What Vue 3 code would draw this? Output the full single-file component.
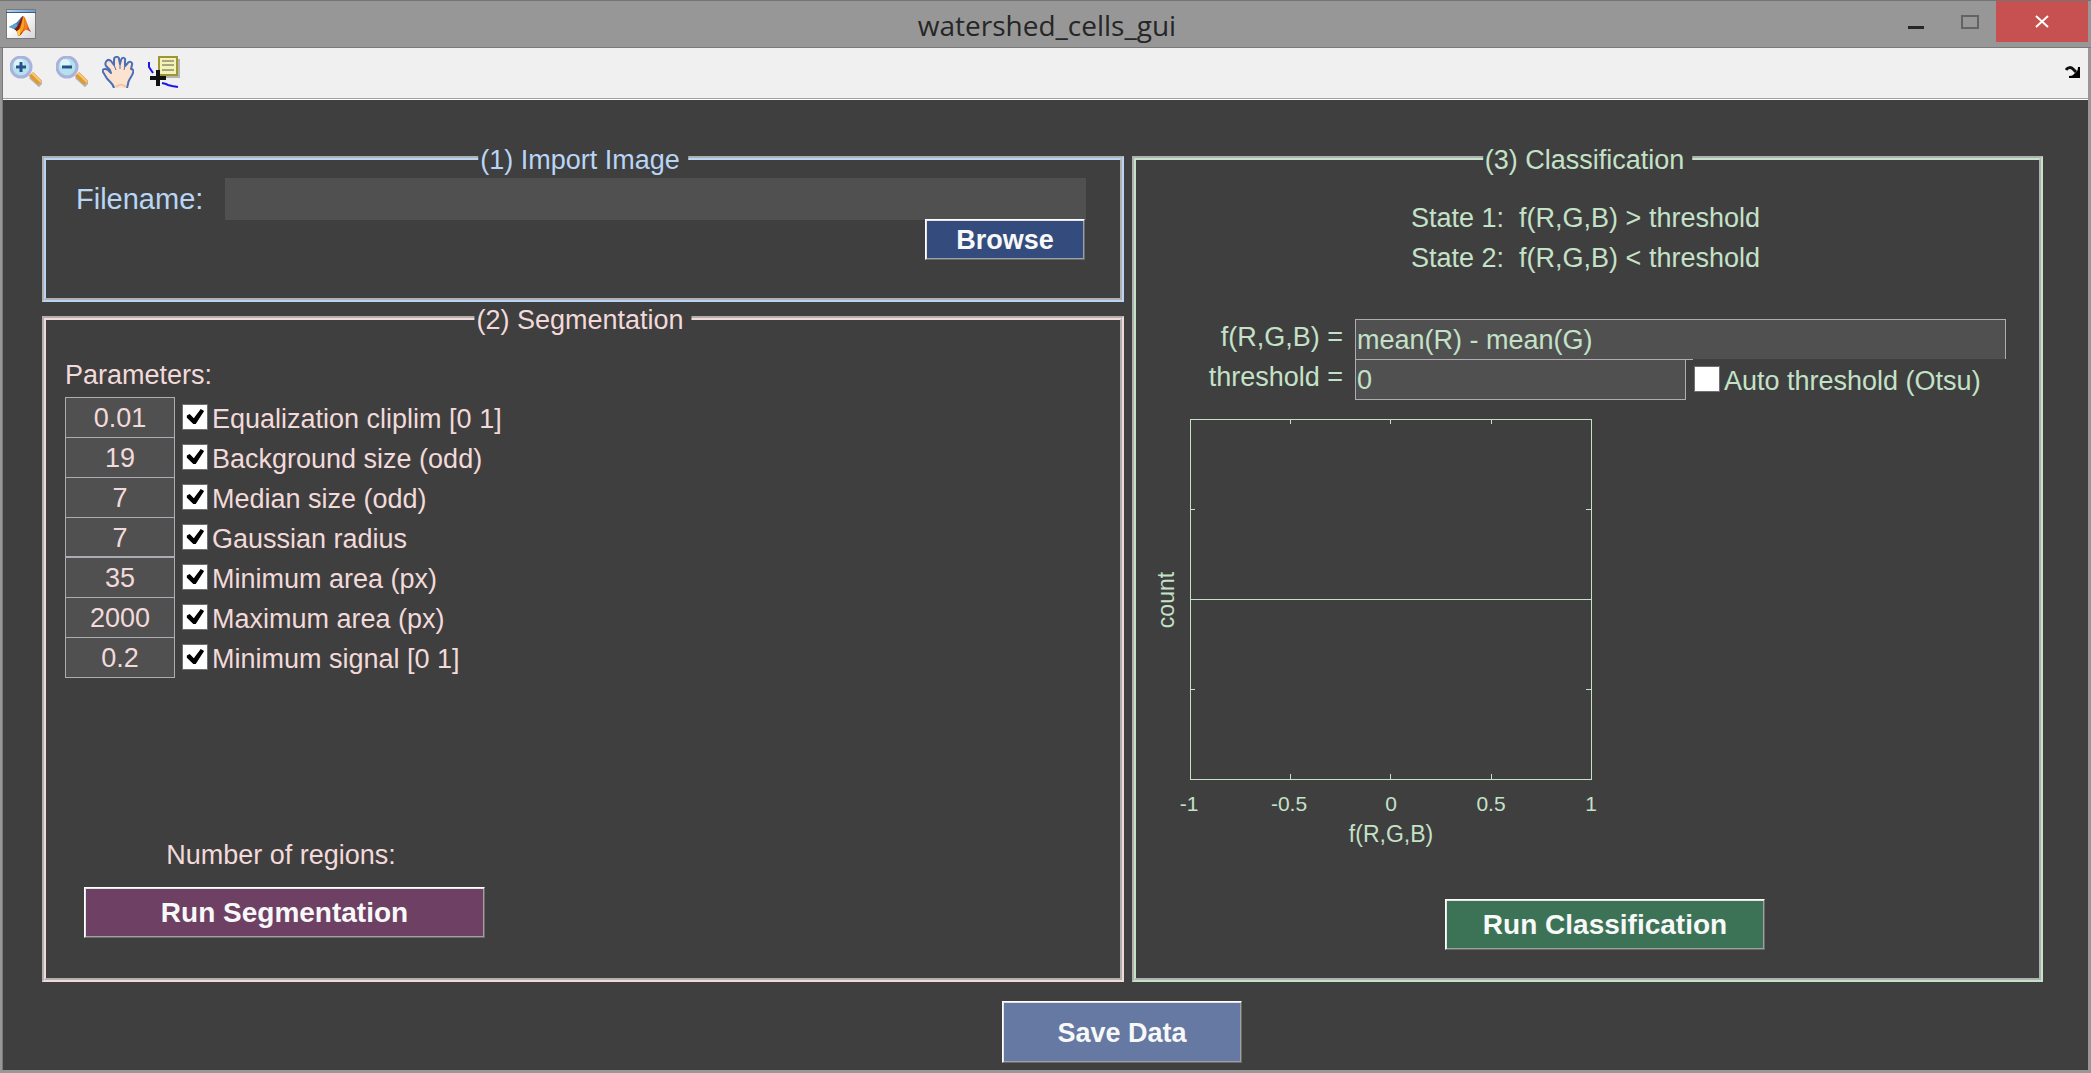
<script setup>
import { ref } from 'vue'

const filename = ref('')
const expression = ref('mean(R) - mean(G)')
const threshold = ref('0')
const autoThreshold = ref(false)

const params = ref([
  { id: 'cliplim', value: '0.01', on: true, label: 'Equalization cliplim [0 1]' },
  { id: 'background', value: '19', on: true, label: 'Background size (odd)' },
  { id: 'median', value: '7', on: true, label: 'Median size (odd)' },
  { id: 'gaussian', value: '7', on: true, label: 'Gaussian radius', last: true },
  { id: 'minarea', value: '35', on: true, label: 'Minimum area (px)' },
  { id: 'maxarea', value: '2000', on: true, label: 'Maximum area (px)' },
  { id: 'minsignal', value: '0.2', on: true, label: 'Minimum signal [0 1]' },
])

const xTicks = [
  { x: 53, text: '-1' },
  { x: 153, text: '-0.5' },
  { x: 255, text: '0' },
  { x: 355, text: '0.5' },
  { x: 455, text: '1' },
]
</script>

<template>
  <div class="window">
    <header class="titlebar">
      <svg class="app-icon" viewBox="0 0 30 30" aria-hidden="true">
        <defs>
          <linearGradient id="doc" x1="0" y1="0" x2="1" y2="1">
            <stop offset="0.4" stop-color="#ffffff" />
            <stop offset="1" stop-color="#d4d4d4" />
          </linearGradient>
          <linearGradient id="bar" x1="0" x2="1">
            <stop offset="0" stop-color="#b5d3ee" />
            <stop offset="1" stop-color="#6a9fd0" />
          </linearGradient>
          <linearGradient id="peak" x1="0" x2="1">
            <stop offset="0.25" stop-color="#8c1c14" />
            <stop offset="0.5" stop-color="#e8501a" />
            <stop offset="0.7" stop-color="#f58a1e" />
            <stop offset="1" stop-color="#a3210f" />
          </linearGradient>
        </defs>
        <rect x="0.5" y="0.5" width="29" height="29" fill="url(#doc)" stroke="#77797c" />
        <rect x="1" y="1" width="28" height="2" fill="url(#bar)" />
        <rect x="0" y="3" width="30" height="1" fill="#3c5a80" />
        <path d="M3 18 L10 14 C13 12 14 8 17 7 L15 15 L11 21 L8 20 Z" fill="#2f7fb5" />
        <path d="M3 18 L8 20 L12 17 L10 14 Z" fill="#5aa5d0" />
        <path d="M8 20 C12 20 14 9 17 7 C20 7 21 17 25 23 C22 21 20 20 18 22 C16 24 15 27 12 27 C12 23 10 21 8 20 Z" fill="url(#peak)" />
        <path d="M17 7 C16 14 15 19 12 22 L13 26 C17 22 19 19 18 9 Z" fill="#f6a31f" />
        <path d="M17 7 C16 13 14 18 11 21 L9 20 C13 18 14 10 17 7 Z" fill="#7c1a16" />
        <path d="M11 22 L14 20 L14 26 L12 27 Z" fill="#fbd034" />
      </svg>
      <h1 class="title">watershed_cells_gui</h1>
      <div class="controls">
        <button class="ctl" type="button" aria-label="Minimize">
          <svg width="18" height="16" viewBox="0 0 18 16"><rect x="0" y="12" width="16" height="3" fill="#262626" /></svg>
        </button>
        <button class="ctl" type="button" aria-label="Maximize">
          <svg width="18" height="16" viewBox="0 0 18 16"><rect x="1" y="2" width="16" height="12" fill="none" stroke="#636363" stroke-width="2" /></svg>
        </button>
        <button class="ctl close" type="button" aria-label="Close">
          <svg width="14" height="14" viewBox="0 0 14 14"><path d="M1 1 L13 12 M13 1 L1 12" stroke="#fff" stroke-width="2" /></svg>
        </button>
      </div>
    </header>

    <div class="client">
      <nav class="toolbar" aria-label="Figure tools">
        <button class="tool" type="button" aria-label="Zoom in">
          <svg viewBox="0 0 32 32">
            <path d="M21 20 L31 29" stroke="#6b6b6b" stroke-width="6" opacity="0.45" />
            <path d="M21 18 L30 27" stroke="#e09a35" stroke-width="6" />
            <path d="M22 17 L31 26" stroke="#f8c778" stroke-width="2" />
            <circle cx="11" cy="11" r="10" fill="#b4e2ec" stroke="#a9b1dc" stroke-width="3" />
            <circle cx="9" cy="8" r="5" fill="#dcf5f8" />
            <path d="M6 11 H16 M11 6 V16" stroke="#27508a" stroke-width="3" />
          </svg>
        </button>
        <button class="tool" type="button" aria-label="Zoom out">
          <svg viewBox="0 0 32 32">
            <path d="M21 20 L31 29" stroke="#6b6b6b" stroke-width="6" opacity="0.45" />
            <path d="M21 18 L30 27" stroke="#e09a35" stroke-width="6" />
            <path d="M22 17 L31 26" stroke="#f8c778" stroke-width="2" />
            <circle cx="11" cy="11" r="10" fill="#b4e2ec" stroke="#a9b1dc" stroke-width="3" />
            <circle cx="9" cy="8" r="5" fill="#dcf5f8" />
            <path d="M6 11 H16" stroke="#27508a" stroke-width="3" />
          </svg>
        </button>
        <button class="tool" type="button" aria-label="Pan">
          <svg viewBox="0 0 32 32">
            <path d="M12 32 C11 27 6 25 4 21 L1 16 C0 13 3 12 6 14 L9 17 L8 14 L4 10 C2 6 6 2 9 5 L12 9 L12 4 C12 0 17 0 17 3 L18 8 L19 4 C20 1 24 1 23 5 L23 10 L25 8 C27 4 31 6 30 9 L29 13 C33 13 31 18 29 21 C27 24 26 26 26 28 L25 32" fill="#fce3cf" stroke="#4a6fb8" stroke-width="2" stroke-linejoin="round" />
            <path d="M12 9 L14 14 M18 8 V13 M23 10 L22 14" fill="none" stroke="#4a6fb8" stroke-width="1" />
            <path d="M14 31 C17 28 21 28 24 31" fill="none" stroke="#f1c49c" stroke-width="2" />
          </svg>
        </button>
        <button class="tool" type="button" aria-label="Data cursor">
          <svg viewBox="0 0 32 32">
            <rect x="13" y="3" width="19" height="19" fill="#9a9a9a" opacity="0.7" />
            <rect x="11" y="1" width="18" height="18" fill="#f4f2b8" stroke="#9c9634" stroke-width="2" />
            <path d="M14 5 H26 M14 9 H26 M14 14 H26" stroke="#a8a67c" stroke-width="2" />
            <path d="M1 6 V11 L5 17 M14 27 L18 28 L20 29 L24 30 L30 31" fill="none" stroke="#1c14ee" stroke-width="2" />
            <path d="M2 22 H18 M10 14 V30" stroke="#111" stroke-width="4" />
          </svg>
        </button>
        <button class="dock" type="button" aria-label="Dock figure">
          <svg width="16" height="13" viewBox="0 0 16 13">
            <path d="M1 4 C3 1 6 1 8 3 L11 6" fill="none" stroke="#111" stroke-width="3" />
            <path d="M15 1 V12 H4 V10 L12 9 L13 1 Z" fill="#000" />
            <path d="M13 4 L13 10 L7 10 Z" fill="#000" />
          </svg>
        </button>
      </nav>

      <main class="figure">
        <div class="panels">
          <div class="left">
            <section class="panel import">
              <h2 class="legend">(1) Import Image</h2>
              <div class="file-row">
                <label for="filename">Filename:</label>
                <input id="filename" v-model="filename" class="file-input" type="text" />
              </div>
              <button class="push browse" type="button">Browse</button>
            </section>

            <section class="panel segmentation">
              <h2 class="legend">(2) Segmentation</h2>
              <p class="subhead">Parameters:</p>
              <ul class="params">
                <li v-for="p in params" :key="p.id" class="param">
                  <input v-model="p.value" class="edit" :class="{ closed: p.last }" type="text" :aria-label="p.label" />
                  <label class="check">
                    <input v-model="p.on" type="checkbox" />
                    <span>{{ p.label }}</span>
                  </label>
                </li>
              </ul>
              <div class="run-seg">
                <p class="regions">Number of regions:</p>
                <button class="push run segment" type="button">Run Segmentation</button>
              </div>
            </section>
          </div>

          <section class="panel classification">
            <h2 class="legend">(3) Classification</h2>
            <div class="states">
              <p>State 1:&nbsp; f(R,G,B) &gt; threshold</p>
              <p>State 2:&nbsp; f(R,G,B) &lt; threshold</p>
            </div>
            <div class="form">
              <label class="name" for="expression">f(R,G,B) =</label>
              <input id="expression" v-model="expression" class="edit" type="text" />
              <label class="name" for="threshold">threshold =</label>
              <div class="threshold-row">
                <input id="threshold" v-model="threshold" class="edit" type="text" />
                <label class="check auto">
                  <input v-model="autoThreshold" type="checkbox" />
                  <span>Auto threshold (Otsu)</span>
                </label>
              </div>
            </div>
            <svg class="plot" width="480" height="460" viewBox="0 0 480 460" role="img" aria-label="Histogram">
              <g class="lines">
                <rect x="54" y="20" width="401" height="360" />
                <path d="M54 200 H455" />
                <path d="M154 20 v5 M254 20 v5 M355 20 v5 M154 380 v-5 M254 380 v-5 M355 380 v-5" />
                <path d="M54 110 h5 M54 290 h5 M455 110 h-5 M455 290 h-5" />
              </g>
              <text v-for="t in xTicks" :key="t.text" class="tick" :x="t.x" y="412">{{ t.text }}</text>
              <text class="axis" x="255" y="443">f(R,G,B)</text>
              <text class="axis" transform="translate(38 201) rotate(-90)">count</text>
            </svg>
            <button class="push run classify" type="button">Run Classification</button>
          </section>
        </div>

        <footer class="footer">
          <button class="push save" type="button">Save Data</button>
        </footer>
      </main>
    </div>
  </div>
</template>

<style>
body {
  margin: 0;
  background: #3f3f3f;
}
</style>

<style scoped>
* {
  box-sizing: border-box;
}

.window {
  display: flex;
  flex-direction: column;
  min-height: 100vh;
  background: #979797;
  font-family: "Liberation Sans", Arial, sans-serif;
  font-size: 27px;
  line-height: 32px;
}

h1,
h2,
p,
ul {
  margin: 0;
  padding: 0;
  font-size: 27px;
  font-weight: normal;
  list-style: none;
}

button {
  padding: 0;
  border: 0;
  background: none;
  font: inherit;
  color: inherit;
}

input {
  margin: 0;
  border-radius: 0;
  font: inherit;
  color: inherit;
}

/* title bar */
.titlebar {
  display: grid;
  grid-template-columns: 1fr auto 1fr;
  height: 48px;
  padding: 0 3px 0 6px;
  border-top: 1px solid #747474;
  border-bottom: 1px solid #7a7878;
}

.app-icon {
  width: 30px;
  height: 30px;
  margin-top: 8px;
}

.title {
  font-family: "Open Sans", "Noto Sans", sans-serif;
  font-size: 28px;
  line-height: 48px;
  color: #262626;
}

.controls {
  display: flex;
  justify-content: flex-end;
  height: 41px;
}

.ctl {
  display: flex;
  align-items: center;
  justify-content: center;
  width: 53px;
}

.ctl.close {
  width: 92px;
  background: #c75050;
}

/* window body */
.client {
  display: flex;
  flex: 1;
  flex-direction: column;
  margin: 0 3px 3px;
  box-shadow: -1px 0 #7a7878;
}

.toolbar {
  display: flex;
  align-items: center;
  gap: 14px;
  height: 52px;
  padding: 0 7px 3px;
  border-bottom: 1px solid #fff;
  background: #f0f0f0;
  box-shadow: inset 0 -1px #a0a0a0;
}

.tool,
.tool svg {
  display: block;
  width: 32px;
  height: 32px;
}

.dock {
  display: flex;
  margin-left: auto;
}

.figure {
  display: flex;
  flex: 1;
  flex-direction: column;
  padding: 56px 45px 7px 39px;
  background: #3f3f3f;
}

.panels {
  display: grid;
  flex: 1;
  grid-template-columns: 1082fr 911fr;
  gap: 8px;
}

.left {
  display: flex;
  flex-direction: column;
  gap: 14px;
}

/* etched frame: a grey line and a tinted line that swap sides at the corners */
.panel {
  position: relative;
  display: flex;
  flex-direction: column;
  border: 2px solid;
  border-color: #b0b0b0 var(--tint) var(--tint) #b0b0b0;
  color: var(--tint);
}

.panel::before {
  content: "";
  position: absolute;
  inset: 0;
  border: 2px solid;
  border-color: var(--tint) #b0b0b0 #b0b0b0 var(--tint);
  pointer-events: none;
}

.legend {
  position: absolute;
  top: -14px;
  left: 50%;
  padding: 0 8px 0 2px;
  background: #3f3f3f;
  transform: translateX(-50%);
  white-space: nowrap;
}

.import {
  --tint: #b9d5f5;
  padding: 20px 36px 40px 32px;
}

.segmentation {
  --tint: #f2dada;
  flex: 1;
  padding: 41px 21px 42px;
}

.classification {
  --tint: #c4e2c8;
  padding: 40px 35px 30px 2px;
}

.file-row {
  display: flex;
  font-size: 29px;
  line-height: 42px;
}

.file-row label {
  width: 149px;
}

.file-input {
  flex: 1;
  height: 42px;
  padding: 0 2px;
  border: 0;
  background: #505050;
}

.push {
  border: 1px solid;
  border-color: #fff #696969 #696969 #fff;
  box-shadow: inset 1px 1px #e3e3e3, inset -1px -1px #a0a0a0;
  color: #f8f8f8;
  font-weight: bold;
}

.run {
  height: 51px;
  padding-top: 1px;
  font-size: 28px;
}

.browse {
  z-index: 1;
  align-self: flex-end;
  width: 160px;
  height: 41px;
  margin: -1px 1px 0 0;
  padding-top: 1px;
  background: #334c7d;
}

.subhead {
  margin-bottom: 6px;
}

.param {
  display: flex;
  gap: 7px;
  height: 40px;
}

.edit {
  height: 41px;
  padding: 2px 1px 0;
  border: 1px solid #aeacb2;
  background: #505050;
}

.param .edit {
  width: 110px;
  text-align: center;
}

.param .edit.closed {
  height: 40px;
}

.check {
  display: flex;
  align-items: center;
  gap: 4px;
}

.check span {
  padding-top: 3px;
}

.check input {
  position: relative;
  width: 26px;
  height: 26px;
  border: 1px solid #707070;
  background: #fff;
  appearance: none;
}

.check input:checked::before {
  content: "";
  position: absolute;
  inset: 0;
  background: #000;
  clip-path: polygon(16% 44%, 28% 37%, 45% 55%, 74% 17%, 88% 25%, 53% 79%, 43% 79%, 16% 53%);
}

.run-seg {
  width: 401px;
  margin: auto 0 0 19px;
}

.regions {
  margin-bottom: 16px;
  padding-right: 7px;
  text-align: center;
}

.segment {
  width: 100%;
  background: #6d4064;
}

.states {
  line-height: 40px;
  text-align: center;
}

.states p {
  padding-left: 29px;
}

.form {
  display: grid;
  grid-template-columns: 207px 1fr;
  grid-auto-rows: 40px;
  column-gap: 12px;
  margin-top: 41px;
}

.name {
  line-height: 36px;
  text-align: right;
}

.threshold-row {
  display: flex;
  gap: 7px;
}

.threshold-row .edit {
  width: 331px;
}

.auto {
  flex: 1;
  padding-left: 1px;
  background: #3f3f3f;
}

.plot {
  display: block;
}

.lines {
  fill: none;
  stroke: #c4e2c8;
  stroke-width: 1;
  shape-rendering: crispEdges;
}

.tick,
.axis {
  fill: #c4e2c8;
  text-anchor: middle;
}

.tick {
  font-size: 21px;
}

.axis {
  font-size: 23px;
}

.classify {
  width: 320px;
  margin: auto 0 0 309px;
  background: #3c7357;
}

.footer {
  display: flex;
  justify-content: center;
  margin-top: 19px;
  padding-left: 159px;
}

.save {
  width: 240px;
  height: 62px;
  padding-top: 1px;
  background: #6579a3;
}
</style>
